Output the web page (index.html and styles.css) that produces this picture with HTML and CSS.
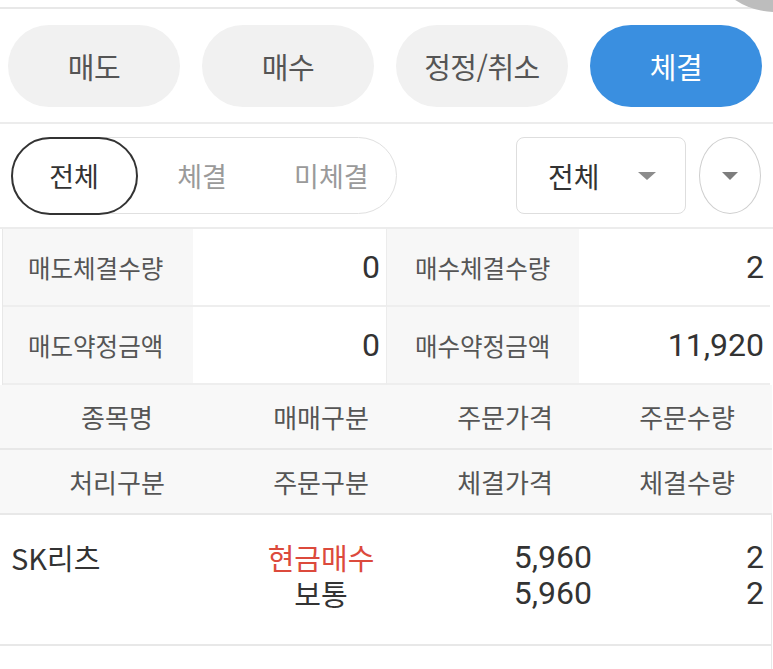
FILE: index.html
```html
<!DOCTYPE html>
<html lang="ko">
<head>
<meta charset="utf-8">
<title>체결</title>
<link rel="stylesheet" href="styles.css">
</head>
<body>
<div class="page">
  <div class="topstrip"><span class="corner-blob"></span></div>

  <nav class="tabs">
    <button class="tab">매도</button>
    <button class="tab">매수</button>
    <button class="tab">정정/취소</button>
    <button class="tab tab-active">체결</button>
  </nav>

  <div class="filters">
    <div class="segment">
      <span class="seg-item seg-active">전체</span>
      <span class="seg-item">체결</span>
      <span class="seg-item">미체결</span>
    </div>
    <div class="select">
      <span class="select-text">전체</span>
      <svg class="caret" width="18" height="8" viewBox="0 0 18 8"><path d="M0 0H18L9 8Z" fill="#8c8c8c"/></svg>
    </div>
    <div class="circle-btn">
      <svg class="caret" width="16" height="8" viewBox="0 0 16 8"><path d="M0 0H16L8 8Z" fill="#7d7d7d"/></svg>
    </div>
  </div>

  <div class="summary">
    <div class="s-label">매도체결수량</div>
    <div class="s-value">0</div>
    <div class="s-label s-label-mid">매수체결수량</div>
    <div class="s-value">2</div>
    <div class="s-label">매도약정금액</div>
    <div class="s-value">0</div>
    <div class="s-label s-label-mid">매수약정금액</div>
    <div class="s-value">11,920</div>
  </div>

  <div class="head-row">
    <span>종목명</span><span>매매구분</span><span>주문가격</span><span>주문수량</span>
  </div>
  <div class="head-row">
    <span>처리구분</span><span>주문구분</span><span>체결가격</span><span>체결수량</span>
  </div>

  <div class="data-row">
    <div class="d-name">SK리츠</div>
    <div class="d-type"><span class="buy">현금매수</span><span>보통</span></div>
    <div class="d-num"><span>5,960</span><span>5,960</span></div>
    <div class="d-num"><span>2</span><span>2</span></div>
  </div>
  <div class="empty-row"></div>
</div>
</body>
</html>
```

FILE: styles.css
```css
* { box-sizing: border-box; }
html, body { margin: 0; padding: 0; background: #fff; }
body {
  font-family: "Noto Sans CJK KR", "Noto Sans", sans-serif;
  color: #333;
  width: 773px;
  height: 669px;
  overflow: hidden;
}
.page { position: relative; width: 773px; height: 669px; overflow: hidden; }

.topstrip {
  height: 9px;
  border-bottom: 2px solid #e8e8e8;
}
.corner-blob {
  position: absolute;
  left: 703px;
  top: -132px;
  width: 144px;
  height: 144px;
  border-radius: 50%;
  background: #bdbdbd;
}

.tabs {
  display: flex;
  gap: 22px;
  padding: 16px 11px 15px 8px;
  border-bottom: 2px solid #ececec;
}
.tab {
  flex: 1;
  height: 82px;
  border: none;
  border-radius: 41px;
  background: #f1f1f1;
  color: #555;
  font-family: "Noto Sans CJK KR", sans-serif;
  font-size: 29px;
  letter-spacing: -0.5px;
  padding: 0;
}
.tab-active { background: #3a8fe0; color: #fff; }

.filters {
  display: flex;
  align-items: center;
  padding: 13px 12px 13px 11px;
  border-bottom: 2px solid #ececec;
}
.segment {
  display: flex;
  width: 386px;
  height: 77px;
  border: 1.5px solid #e0e0e0;
  border-radius: 39px;
}
.seg-item {
  flex: 1;
  display: flex;
  align-items: center;
  justify-content: center;
  font-size: 27px;
  color: #9a9a9a;
  border-radius: 39px;
}
.seg-active {
  flex: 0 0 127px;
  margin: -1.5px 0 -1.5px -1.5px;
  border: 2px solid #333;
  color: #333;
}
.select {
  margin-left: auto;
  width: 170px;
  height: 77px;
  border: 1.5px solid #dedede;
  border-radius: 8px;
  display: flex;
  align-items: center;
  padding: 0 29px 0 31px;
}
.select-text { font-size: 28px; color: #333; }
.select .caret { margin-left: auto; }
.circle-btn {
  margin-left: 13px;
  width: 62px;
  height: 77px;
  border: 1.5px solid #cfcfcf;
  border-radius: 50%;
  display: flex;
  align-items: center;
  justify-content: center;
}

.summary {
  display: grid;
  grid-template-columns: 190px 193px 193px 191px;
  margin: 0 3px 0 2px;
  border-left: 1.5px solid #e8e8e8;
  border-right: 1.5px solid #e8e8e8;
}
.s-label, .s-value {
  height: 78px;
  display: flex;
  align-items: center;
  border-bottom: 2px solid #eeeeee;
}
.s-label {
  background: #f7f7f7;
  color: #555;
  font-size: 24.5px;
  padding-left: 25px;
}
.s-label-mid { border-left: 1.5px solid #ececec; padding-left: 28px; }
.s-value {
  background: #fff;
  justify-content: flex-end;
  padding-right: 6px;
  font-family: "Roboto", sans-serif;
  font-size: 32px;
  color: #333;
}

.head-row {
  display: grid;
  grid-template-columns: 234px 174px 194px 170px;
  height: 65px;
  align-items: center;
  background: #f8f8f8;
  border-bottom: 2px solid #e8e8e8;
  margin-right: 1px;
}
.head-row span {
  text-align: center;
  font-size: 26px;
  color: #555;
}

.data-row {
  display: grid;
  grid-template-columns: 234px 174px 194px 170px;
  height: 131px;
  padding-top: 24px;
  border-bottom: 2px solid #e8e8e8;
  border-right: 1.5px solid #e8e8e8;
  margin-right: 1px;
  line-height: 36px;
}
.d-name {
  padding-left: 11px;
  font-size: 29px;
  color: #333;
}
.d-type {
  display: flex;
  flex-direction: column;
  align-items: center;
  font-size: 29px;
  color: #333;
}
.d-type span { height: 36px; }
.d-type .buy { color: #dc4a3c; }
.d-num {
  display: flex;
  flex-direction: column;
  align-items: flex-end;
  padding-right: 10px;
  font-family: "Roboto", sans-serif;
  font-size: 32px;
  color: #333;
}
.d-num:last-child { padding-right: 8px; }
.empty-row {
  height: 40px;
  border-right: 1.5px solid #e8e8e8;
  margin-right: 1px;
}
```
